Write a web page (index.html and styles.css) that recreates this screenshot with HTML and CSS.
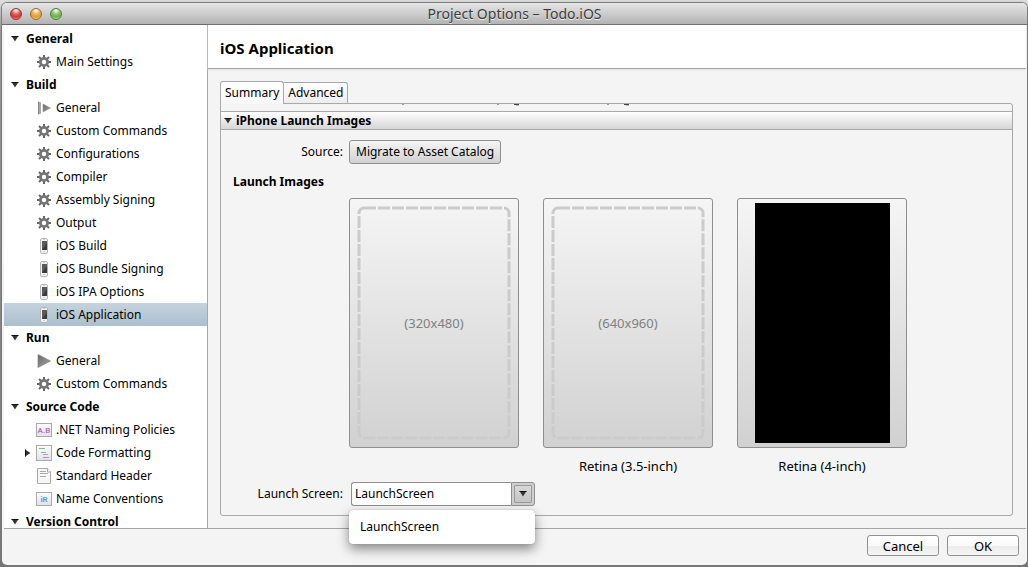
FILE: index.html
```html
<!DOCTYPE html>
<html lang="en">
<head>
<meta charset="utf-8">
<title>Project Options – Todo.iOS</title>
<link rel="stylesheet" href="styles.css">
</head>
<body>
<svg class="defs" aria-hidden="true">
  <defs>
    <linearGradient id="metal" x1="0" y1="0" x2="1" y2="1"><stop offset="0" stop-color="#6a6a6a"/><stop offset="1" stop-color="#a4a4a4"/></linearGradient>
    <linearGradient id="tile" x1="0" y1="0" x2="0" y2="1"><stop offset="0" stop-color="#fdfdfd"/><stop offset="1" stop-color="#dfe2e6"/></linearGradient>
    <symbol id="gear" viewBox="0 0 16 16">
      <path d="M8 1v3M8 12v3M1 8h3M12 8h3M3 3l2.400 2.400M10.600 10.600L13 13M13 3l-2.400 2.400M5.400 10.600L3 13" stroke="#666" stroke-width="2"/>
      <circle cx="8" cy="8" r="3.600" fill="#fff" stroke="#757575" stroke-width="2.800"/>
    </symbol>
    <symbol id="phone" viewBox="0 0 16 16">
      <rect x="4.500" y=".5" width="7" height="15" rx="1.500" fill="#f3f3f3" stroke="#b5b5b5"/>
      <rect x="6" y="3" width="5" height="9" fill="#5a5a5a"/><path d="M6 12l5-7v7z" fill="#3b3b3b"/>
      <path d="M7 1.500h2M7 13.500h2" stroke="#ccc"/>
    </symbol>
    <symbol id="step" viewBox="0 0 16 16"><path d="M2 1.500l3 1v11l-3 1z" fill="#858585"/><path d="M4 2v12" stroke="#ccc"/><path d="M7 4l7.500 4L7 12z" fill="url(#metal)" stroke="#8a8a8a" stroke-width=".5"/></symbol>
    <symbol id="play" viewBox="0 0 16 16"><path d="M2 1.500L14.500 8 2 14.500z" fill="url(#metal)" stroke="#777" stroke-width=".6"/></symbol>
    <symbol id="naming" viewBox="0 0 16 16"><rect x=".5" y="1.500" width="15" height="13" fill="url(#tile)" stroke="#aaa"/><text x="8" y="11" class="tile-text purple">A.B</text></symbol>
    <symbol id="format" viewBox="0 0 16 16"><rect x=".5" y=".5" width="15" height="15" fill="url(#tile)" stroke="#aaa"/><path d="M3 3.500h6" stroke="#86bd78"/><path d="M5 7.500h5M7 9.500h5" stroke="#8fadd6"/><path d="M7 12.500h6" stroke="#c583cb"/></symbol>
    <symbol id="page" viewBox="0 0 16 16"><path d="M1.500.5h10l3 3.500v11.500h-13z" fill="#f7f7f7" stroke="#aaa"/><path d="M11.500.5v3.500h3" fill="#fff" stroke="#aaa"/><path d="M4 3.500h6M4 5.500h8M4 8.500h6" stroke="#aaa"/></symbol>
    <symbol id="names" viewBox="0 0 16 16"><rect x=".5" y="1.500" width="15" height="13" fill="url(#tile)" stroke="#aaa"/><text x="8" y="11" class="tile-text blue">iR</text></symbol>
    <symbol id="down" viewBox="0 0 8 8"><path d="M.5 1h7L4 6.500z" fill="#333"/><path d="M.5 1.500h7" stroke="#111"/></symbol>
    <symbol id="right" viewBox="0 0 8 8"><path d="M1 .5v7l5.500-3.500z" fill="#333"/><path d="M1.500.5v7" stroke="#111"/></symbol>
  </defs>
</svg>
<div class="window">
  <header class="titlebar">
    <div class="lights">
      <button class="light red" aria-label="Close"></button>
      <button class="light amber" aria-label="Minimize"></button>
      <button class="light green" aria-label="Zoom"></button>
    </div>
    <span class="window-title">Project Options – Todo.iOS</span>
  </header>
  <div class="body">
    <nav class="sidebar">
      <div class="row group"><svg class="arrow"><use href="#down"/></svg>General</div>
      <a class="row item"><svg class="icon"><use href="#gear"/></svg>Main Settings</a>
      <div class="row group"><svg class="arrow"><use href="#down"/></svg>Build</div>
      <a class="row item"><svg class="icon"><use href="#step"/></svg>General</a>
      <a class="row item"><svg class="icon"><use href="#gear"/></svg>Custom Commands</a>
      <a class="row item"><svg class="icon"><use href="#gear"/></svg>Configurations</a>
      <a class="row item"><svg class="icon"><use href="#gear"/></svg>Compiler</a>
      <a class="row item"><svg class="icon"><use href="#gear"/></svg>Assembly Signing</a>
      <a class="row item"><svg class="icon"><use href="#gear"/></svg>Output</a>
      <a class="row item"><svg class="icon"><use href="#phone"/></svg>iOS Build</a>
      <a class="row item"><svg class="icon"><use href="#phone"/></svg>iOS Bundle Signing</a>
      <a class="row item"><svg class="icon"><use href="#phone"/></svg>iOS IPA Options</a>
      <a class="row item selected"><svg class="icon"><use href="#phone"/></svg>iOS Application</a>
      <div class="row group"><svg class="arrow"><use href="#down"/></svg>Run</div>
      <a class="row item"><svg class="icon"><use href="#play"/></svg>General</a>
      <a class="row item"><svg class="icon"><use href="#gear"/></svg>Custom Commands</a>
      <div class="row group"><svg class="arrow"><use href="#down"/></svg>Source Code</div>
      <a class="row item"><svg class="icon"><use href="#naming"/></svg>.NET Naming Policies</a>
      <a class="row item nested"><svg class="arrow"><use href="#right"/></svg><svg class="icon"><use href="#format"/></svg>Code Formatting</a>
      <a class="row item"><svg class="icon"><use href="#page"/></svg>Standard Header</a>
      <a class="row item"><svg class="icon"><use href="#names"/></svg>Name Conventions</a>
      <div class="row group"><svg class="arrow"><use href="#down"/></svg>Version Control</div>
    </nav>
    <main class="main">
      <h1 class="heading">iOS Application</h1>
      <div class="content">
        <div class="tabs" role="tablist">
          <button class="tab active" role="tab" aria-selected="true">Summary</button>
          <button class="tab" role="tab" aria-selected="false">Advanced</button>
        </div>
        <section class="pane">
          <svg class="scroll-edge" aria-hidden="true">
            <path d="M181 .5h2M276 .5h2M386 .5h2" stroke="#999"/>
            <path d="M293 .5h5M403 .5h5" stroke="#444"/>
            <path d="M295 1.500h3M405 1.500h3" stroke="#bbb"/>
          </svg>
          <h2 class="section-title"><svg class="arrow"><use href="#down"/></svg>iPhone Launch Images</h2>
          <div class="form">
            <div class="field">
              <span class="label">Source:</span>
              <button class="migrate">Migrate to Asset Catalog</button>
            </div>
            <h3 class="subheading">Launch Images</h3>
            <div class="images">
              <figure class="shot">
                <div class="well"><svg class="dashes"><rect class="dash" x="2" y="2" width="150" height="230" rx="5"/></svg><span class="size">(320x480)</span></div>
              </figure>
              <figure class="shot">
                <div class="well"><svg class="dashes"><rect class="dash" x="2" y="2" width="150" height="230" rx="5"/></svg><span class="size">(640x960)</span></div>
                <figcaption>Retina (3.5-inch)</figcaption>
              </figure>
              <figure class="shot">
                <div class="well"><div class="preview"></div></div>
                <figcaption>Retina (4-inch)</figcaption>
              </figure>
            </div>
            <div class="field launch">
              <label class="label" for="screen">Launch Screen:</label>
              <div class="combo">
                <input class="combo-input" id="screen" type="text" value="LaunchScreen">
                <button class="combo-button" aria-label="Show choices"><span class="combo-inner"><svg class="combo-arrow" viewBox="0 0 8 8"><use href="#down"/></svg></span></button>
                <div class="menu" role="listbox"><div role="option">LaunchScreen</div></div>
              </div>
            </div>
          </div>
        </section>
      </div>
    </main>
  </div>
  <footer class="footer">
    <button class="action">Cancel</button>
    <button class="action">OK</button>
  </footer>
</div>
</body>
</html>
```
FILE: styles.css
```css
* { box-sizing: border-box; }
body {
  margin: 0;
  height: 100vh;
  padding: 3px 1px 2px 2px;
  overflow: hidden;
  background: linear-gradient(#dcdcdc 0, #dcdcdc 3px, #9a9a9a 30px, #777);
  font: 12px/16px "Noto Sans", "Open Sans", sans-serif;
  color: #000;
}
button, input { font: inherit; color: inherit; margin: 0; padding: 0; }
.defs { position: absolute; width: 0; height: 0; }
.tile-text { font: bold 8px Roboto, sans-serif; text-anchor: middle; }
.purple { fill: #c070c8; }
.blue { fill: #6e98d4; }
.window {
  display: flex;
  flex-direction: column;
  height: 100%;
  border-radius: 5px;
  overflow: hidden;
  background: #f4f4f4;
  box-shadow: 0 0 1px 1px #777;
}
.titlebar {
  display: grid;
  grid-template-columns: 1fr auto 1fr;
  align-items: center;
  flex: none;
  height: 22px;
  padding: 0 8px;
  background: linear-gradient(#e6e6e6, #b3b3b3);
  border-bottom: 1px solid #6b6b6b;
}
.lights { display: flex; gap: 8px; }
.light {
  width: 12px;
  height: 12px;
  border: 1px solid #777;
  border-radius: 50%;
}
.red { background: radial-gradient(circle at 50% 15%, #fff 0, #ea5a5c 40%, #d5343a 65%, #ff9b96); border-color: #8b3a3c; }
.amber { background: radial-gradient(circle at 50% 15%, #fff 0, #f0b45a 40%, #e09a35 65%, #ffe791); border-color: #8f6a35; }
.green { background: radial-gradient(circle at 50% 15%, #fff 0, #8ec46c 40%, #6faf4a 65%, #ccf29e); border-color: #4f7a3b; }
.window-title { font-size: 14px; color: #3c3c3c; text-shadow: 0 1px 0 #ececec; }
.body { display: flex; flex: 1; min-height: 0; margin: 0 1px 0 2px; border-bottom: 1px solid #a5a5a5; }
.sidebar {
  flex: none;
  width: 204px;
  padding-top: 2px;
  overflow: hidden;
  background: #fff;
  border-right: 1px solid #a8a8a8;
}
.row { display: flex; align-items: center; height: 23px; white-space: nowrap; }
.arrow { flex: none; width: 8px; height: 8px; }
.group { gap: 7px; padding-left: 7px; font-weight: bold; }
.item { gap: 4px; padding-left: 32px; }
.nested { padding-left: 20px; }
.icon { flex: none; width: 16px; height: 16px; }
.selected { background: linear-gradient(#c5d3de, #abbfce); }
.main { display: flex; flex-direction: column; flex: 1; min-width: 0; }
.heading {
  flex: none;
  height: 44px;
  margin: 0;
  padding: 14px 12px 0;
  font-size: 15px;
  line-height: 18px;
  background: #fff;
  border-bottom: 1px solid #a5a5a5;
  box-shadow: 0 1px 2px #ddd;
}
.content { display: flex; flex-direction: column; flex: 1; min-height: 0; padding: 12px 13px 12px 12px; }
.tabs { display: flex; align-items: flex-end; flex: none; height: 22px; }
.tab {
  height: 21px;
  padding: 0 4px;
  border: 1px solid #a9a9a9;
  border-left: 0;
  border-bottom: 0;
  border-radius: 0 3px 0 0;
  background: linear-gradient(#fff, #ededed);
  white-space: nowrap;
}
.active { z-index: 1; height: 23px; margin-bottom: -1px; border-left: 1px solid #a9a9a9; border-radius: 3px 3px 0 0; background: linear-gradient(#fff, #f7f7f7); }
.pane { flex: 1; min-height: 0; border: 1px solid #a9a9a9; border-radius: 0 3px 3px 3px; }
.scroll-edge { display: block; width: 100%; height: 7px; }
.section-title {
  display: flex;
  align-items: center;
  gap: 4px;
  height: 19px;
  margin: 0;
  padding-left: 3px;
  font-size: 12px;
  background: linear-gradient(#fff, #d6d6d6);
  border-top: 1px solid #a9a9a9;
  border-bottom: 1px solid #a9a9a9;
}
.form { padding: 10px 12px 0; }
.field { display: flex; align-items: center; gap: 6px; }
.label { width: 110px; text-align: right; white-space: nowrap; }
.migrate {
  height: 24px;
  padding: 0 6px;
  border: 1px solid #8f8f8f;
  border-radius: 3px;
  background: linear-gradient(#f5f5f5, #d1d1d1);
  white-space: nowrap;
}
.subheading { margin: 10px 0 8px; font-size: 12px; line-height: 16px; }
.images { display: flex; gap: 24px; padding-left: 116px; }
.shot { width: 170px; margin: 0; text-align: center; }
.well {
  display: grid;
  place-items: center;
  height: 250px;
  border: 1px solid #8f8f8f;
  border-radius: 3px;
  background: linear-gradient(#f5f5f5, #d1d1d1);
}
.well > * { grid-area: 1 / 1; }
.dashes { width: 154px; height: 234px; }
.dash { fill: none; stroke: #cbcbcb; stroke-width: 3; stroke-dasharray: 12 2; }
.size { font-size: 13px; color: #808080; }
.preview { width: 135px; height: 240px; background: #000; }
figcaption { margin-top: 10px; font-size: 13px; }
.launch { margin-top: 8px; }
.combo { position: relative; display: flex; width: 184px; height: 24px; margin-left: 2px; }
.combo-input { flex: 1; min-width: 0; padding: 0 3px; border: 1px solid #8f8f8f; border-right: 0; border-radius: 3px 0 0 3px; background: #fff; outline: 0; }
.combo-button { display: grid; place-items: stretch; width: 24px; padding: 2px; border: 1px solid #8f8f8f; border-radius: 0 3px 3px 0; background: #cfcfcf; }
.combo-inner { display: grid; place-items: center; border: 1px solid #999; border-radius: 1px; background: linear-gradient(#d8d8d8, #c5c5c5); }
.combo-arrow { width: 8px; height: 8px; }
.menu {
  position: absolute;
  top: 28px;
  left: -2px;
  z-index: 2;
  width: 186px;
  padding: 9px 11px;
  border-radius: 4px;
  background: #fff;
  box-shadow: 0 0 1px #888, 0 5px 12px rgba(0, 0, 0, .45);
}
.footer { display: flex; justify-content: flex-end; gap: 8px; flex: none; height: 36px; padding: 6px 8px 0; }
.action {
  width: 72px;
  height: 21px;
  line-height: 18px;
  border: 1px solid #929292;
  border-radius: 3px;
  background: linear-gradient(#fff 0, #fafafa 50%, #ececec 55%, #f6f6f6);
  font-size: 13px;
}
```
